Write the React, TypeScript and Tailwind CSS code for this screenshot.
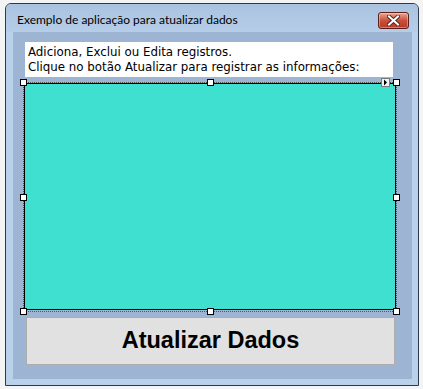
import React from "react";

const handlePos = [
  "-left-[4px] -top-[4px]",
  "left-[183px] -top-[4px]",
  "-right-[4px] -top-[4px]",
  "-left-[4px] top-[111px]",
  "-right-[4px] top-[111px]",
  "-left-[4px] -bottom-[4px]",
  "left-[183px] -bottom-[4px]",
  "-right-[4px] -bottom-[4px]",
];

function CloseButton() {
  return (
    <div className="mt-[8px] mr-[9px] w-[31px] h-[17px] rounded-[3px] border border-[#5a1f1a] bg-gradient-to-b from-[#e8a493] via-[#c9503a] to-[#b83a26] flex items-center justify-center shadow-[inset_0_0_0_1px_rgba(255,255,255,0.35)]">
      <svg width="13" height="11" viewBox="0 0 13 11">
        <path d="M2 1.5 L11 9.5 M11 1.5 L2 9.5" stroke="#5a2a22" strokeWidth="4" strokeLinecap="square" />
        <path d="M2 1.5 L11 9.5 M11 1.5 L2 9.5" stroke="#ffffff" strokeWidth="2" strokeLinecap="square" />
      </svg>
    </div>
  );
}

export default function App() {
  return (
    <div className="w-[423px] h-[389px] bg-[#f4f4f4] pt-[3px] pl-[5px]">
      <div className="w-[414px] h-[383px] flex flex-col border border-[#2e3a46] rounded-t-[6px] bg-[#b9d1ea] overflow-hidden">
        {/* title bar */}
        <div className="h-[28px] flex items-start bg-gradient-to-b from-[#a9c3e0] to-[#b6cde8] pl-[11px]">
          <span
            className="mt-[9px] text-[12px] leading-[14px] text-black"
            style={{ fontFamily: "Lato, 'Noto Sans', sans-serif" }}
          >
            Exemplo de aplicação para atualizar dados
          </span>
          <div className="ml-auto">
            <CloseButton />
          </div>
        </div>

        {/* client area */}
        <div className="flex-1 mx-[6px] mb-[6px] ml-[7px] bg-[#9db5d2] pt-[10px] flex flex-col">
          <div
            className="ml-[12px] w-[368px] h-[35px] bg-white pl-[3px] pt-[2px] text-[13.15px] leading-[15px] text-black whitespace-nowrap"
            style={{ fontFamily: "'DejaVu Sans Condensed', 'DejaVu Sans', sans-serif" }}
          >
            <div>Adiciona, Exclui ou Edita registros.</div>
            <div>Clique no botão Atualizar para registrar as informações:</div>
          </div>

          {/* selected panel */}
          <div className="relative ml-[10px] mt-[5px] w-[374px] h-[230px] border border-dotted border-[#555] pb-[1px] flex">
            <div className="flex-1 bg-[#40e0d0] border border-black" />
            {handlePos.map((p, i) => (
              <div key={i} className={`absolute w-[7px] h-[7px] bg-white border border-black ${p}`} />
            ))}
            <div className="absolute left-[357px] -top-[5px] w-[9px] h-[9px] bg-[#f2f2f2] border border-[#7a7a7a] flex items-center justify-center">
              <svg width="5" height="7" viewBox="0 0 5 7">
                <path d="M1 0.5 L4 3.5 L1 6.5 Z" fill="#000" />
              </svg>
            </div>
          </div>

          <button
            className="ml-[13px] mt-[5px] w-[369px] h-[48px] bg-[#e1e1e1] border border-[#adadad] text-[23.5px] font-bold text-black flex items-center justify-center"
            style={{ fontFamily: "'Liberation Sans', Arial, sans-serif" }}
          >
            Atualizar Dados
          </button>
        </div>
      </div>
    </div>
  );
}
